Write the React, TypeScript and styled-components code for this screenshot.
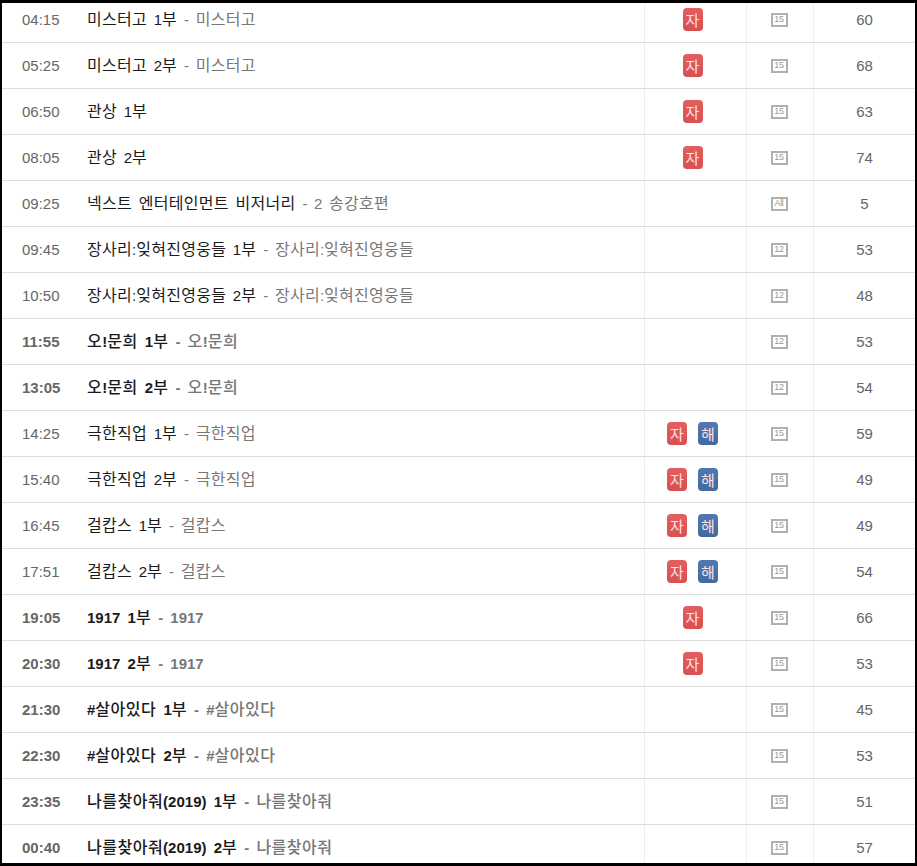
import React from "react";
import styled, { createGlobalStyle } from "styled-components";

const Global = createGlobalStyle`
  html, body { margin: 0; padding: 0; background: #fff; }
  body { font-family: "Liberation Sans", "Noto Sans CJK KR", sans-serif; }
`;

const Frame = styled.div`
  box-sizing: border-box;
  width: 917px;
  height: 866px;
  overflow: hidden;
  background: #fff;
  border-style: solid;
  border-color: #000;
  border-width: 3px 2px 3px 2px;
`;

const Table = styled.div`
  margin-top: -6px;
  display: flex;
  flex-direction: column;
`;

const Row = styled.div`
  box-sizing: border-box;
  height: 46px;
  flex: none;
  display: grid;
  grid-template-columns: 642px 102px 67px 1fr;
  border-bottom: 1px solid #ddd;
`;

const MainCell = styled.div`
  display: flex;
  align-items: center;
  font-size: 15px;
  line-height: 20px;
  white-space: pre;
`;

const Time = styled.span<{ $bold: boolean }>`
  width: 85px;
  flex: none;
  box-sizing: border-box;
  padding-left: 20px;
  color: #666;
  font-size: 15px;
  font-weight: ${(p) => (p.$bold ? 700 : 400)};
`;

const Title = styled.span<{ $bold: boolean }>`
  color: #1a1a1a;
  font-weight: ${(p) => (p.$bold ? 700 : 400)};
  word-spacing: ${(p) => (p.$bold ? 3 : 2.5)}px;
`;

const Series = styled.span<{ $bold: boolean }>`
  color: #777;
  font-weight: ${(p) => (p.$bold ? 700 : 400)};
  margin-left: 7px;
  word-spacing: ${(p) => (p.$bold ? 3 : 2.5)}px;
`;

const Hangul = styled.span<{ $bold: boolean }>`
  font-size: 16px;
  letter-spacing: ${(p) => (p.$bold ? 0.5 : 0.28)}px;
  font-weight: ${(p) => (p.$bold ? 500 : 400)};
`;

const BadgeCell = styled.div`
  border-left: 1px solid #eee;
  display: flex;
  align-items: center;
  justify-content: center;
  gap: 11px;
  padding-right: 6px;
`;

const Badge = styled.span<{ $kind: "red" | "blue" }>`
  width: 20px;
  height: 23px;
  border-radius: 4px;
  display: flex;
  align-items: center;
  justify-content: center;
  font-size: 15px;
  color: #fbe3e3;
  background: ${(p) =>
    p.$kind === "red"
      ? "linear-gradient(#e25f5f, #d94f52)"
      : "linear-gradient(#5079b4, #44699f)"};
`;

const RatingCell = styled.div`
  border-left: 1px solid #eee;
  display: flex;
  align-items: center;
  justify-content: center;
  padding-right: 2px;
`;

const Rating = styled.span`
  box-sizing: border-box;
  width: 17px;
  height: 14px;
  border: 2px solid #b0b0b0;
  display: flex;
  align-items: center;
  justify-content: center;
  font-size: 9px;
  line-height: 1;
  letter-spacing: -0.3px;
  color: #999;
`;

const CountCell = styled.div`
  border-left: 1px solid #eee;
  display: flex;
  align-items: center;
  justify-content: center;
  font-size: 15px;
  color: #666;
`;

type Item = {
  time: string;
  title: string;
  series?: string;
  bold?: boolean;
  sub?: boolean;
  dub?: boolean;
  rating: string;
  count: number;
};

const items: Item[] = [
  { time: "04:15", title: "미스터고 1부", series: "미스터고", sub: true, rating: "15", count: 60 },
  { time: "05:25", title: "미스터고 2부", series: "미스터고", sub: true, rating: "15", count: 68 },
  { time: "06:50", title: "관상 1부", sub: true, rating: "15", count: 63 },
  { time: "08:05", title: "관상 2부", sub: true, rating: "15", count: 74 },
  { time: "09:25", title: "넥스트 엔터테인먼트 비저너리", series: "2 송강호편", rating: "All", count: 5 },
  { time: "09:45", title: "장사리:잊혀진영웅들 1부", series: "장사리:잊혀진영웅들", rating: "12", count: 53 },
  { time: "10:50", title: "장사리:잊혀진영웅들 2부", series: "장사리:잊혀진영웅들", rating: "12", count: 48 },
  { time: "11:55", title: "오!문희 1부", series: "오!문희", bold: true, rating: "12", count: 53 },
  { time: "13:05", title: "오!문희 2부", series: "오!문희", bold: true, rating: "12", count: 54 },
  { time: "14:25", title: "극한직업 1부", series: "극한직업", sub: true, dub: true, rating: "15", count: 59 },
  { time: "15:40", title: "극한직업 2부", series: "극한직업", sub: true, dub: true, rating: "15", count: 49 },
  { time: "16:45", title: "걸캅스 1부", series: "걸캅스", sub: true, dub: true, rating: "15", count: 49 },
  { time: "17:51", title: "걸캅스 2부", series: "걸캅스", sub: true, dub: true, rating: "15", count: 54 },
  { time: "19:05", title: "1917 1부", series: "1917", bold: true, sub: true, rating: "15", count: 66 },
  { time: "20:30", title: "1917 2부", series: "1917", bold: true, sub: true, rating: "15", count: 53 },
  { time: "21:30", title: "#살아있다 1부", series: "#살아있다", bold: true, rating: "15", count: 45 },
  { time: "22:30", title: "#살아있다 2부", series: "#살아있다", bold: true, rating: "15", count: 53 },
  { time: "23:35", title: "나를찾아줘(2019) 1부", series: "나를찾아줘", bold: true, rating: "15", count: 51 },
  { time: "00:40", title: "나를찾아줘(2019) 2부", series: "나를찾아줘", bold: true, rating: "15", count: 57 },
];

function Mixed({ text, bold }: { text: string; bold: boolean }) {
  return (
    <>
      {text.split(/([가-힣]+)/).map((part, i) =>
        /[가-힣]/.test(part) ? (
          <Hangul key={i} $bold={bold}>
            {part}
          </Hangul>
        ) : (
          part
        )
      )}
    </>
  );
}

export default function App() {
  return (
    <Frame>
      <Global />
      <Table>
        {items.map((it) => {
          const bold = !!it.bold;
          return (
            <Row key={it.time}>
              <MainCell>
                <Time $bold={bold}>{it.time}</Time>
                <Title $bold={bold}>
                  <Mixed text={it.title} bold={bold} />
                </Title>
                {it.series && (
                  <Series $bold={bold}>
                    <Mixed text={`- ${it.series}`} bold={bold} />
                  </Series>
                )}
              </MainCell>
              <BadgeCell>
                {it.sub && <Badge $kind="red">자</Badge>}
                {it.dub && <Badge $kind="blue">해</Badge>}
              </BadgeCell>
              <RatingCell>
                <Rating>{it.rating}</Rating>
              </RatingCell>
              <CountCell>{it.count}</CountCell>
            </Row>
          );
        })}
      </Table>
    </Frame>
  );
}
